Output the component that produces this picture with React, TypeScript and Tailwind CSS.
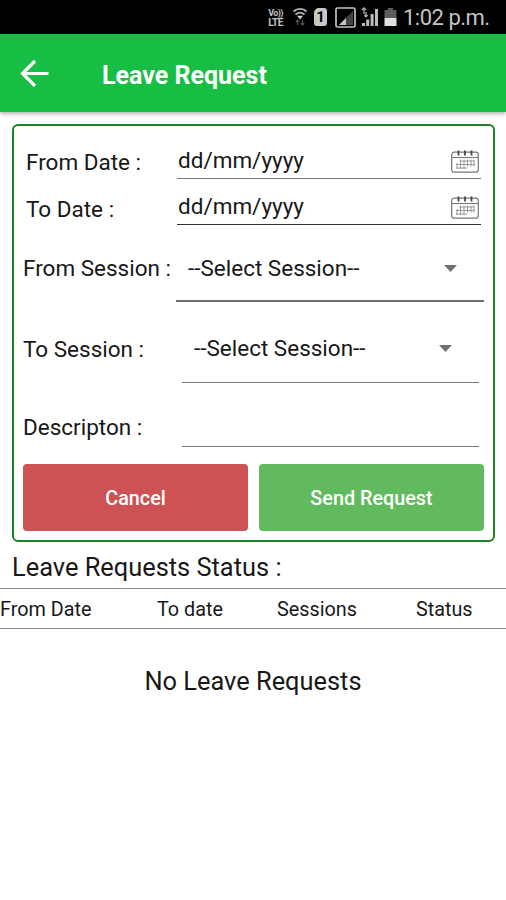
import React from "react";

function StatusBar() {
  return (
    <div className="flex h-[34px] items-center bg-black pl-[266px] text-[#c4c4c4]">
      <div className="flex w-[19px] flex-col items-center pt-[2px] font-bold">
        <span className="text-[9px] leading-[9px] tracking-[-0.6px]">Vo))</span>
        <span className="text-[10px] leading-[10px] tracking-[-0.5px]">LTE</span>
      </div>
      <svg width="16" height="20" viewBox="0 0 16 20" fill="none" className="ml-[7px]">
        <path d="M1.5 4.5C5.5 1 11 1 14.5 4.5M3.5 7.5C6.5 5 9.5 5 12.5 7.5" stroke="#b5b5b5" strokeWidth="1.9" />
        <path d="M5 8.8h6L8 12.5z" fill="#d0d0d0" />
        <path d="M5.5 13v5M3.8 15l1.7-2 1.7 2M10.5 13v5M8.8 16l1.7 2 1.7-2" stroke="#4d4d4d" strokeWidth="1.3" />
      </svg>
      <div className="ml-[6px] flex h-[18px] w-[13px] items-center justify-center rounded-[3px] rounded-tl-[5px] bg-[#c8c8c8] text-[15px] font-bold leading-none text-black">
        1
      </div>
      <svg width="21" height="21" viewBox="0 0 21 21" fill="none" className="ml-[8px]">
        <rect x="1" y="1" width="19" height="19" rx="1.5" stroke="#c2c2c2" strokeWidth="1.7" />
        <path d="M18 4v14H4z" fill="#444" />
        <path d="M11 11v7H4z" fill="#c2c2c2" />
      </svg>
      <svg width="18" height="20" viewBox="0 0 18 20" fill="none" className="ml-[5px]">
        <path d="M3 1v6M1 3l2-2 2 2M5 5v5M3.4 8L5 10l1.6-2" stroke="#aaa" strokeWidth="1.3" />
        <path d="M1 16h3v3H1zM5.2 12.5h3v6.5h-3zM9.6 7h3v12h-3zM14 2h3v17h-3z" fill="#bcbcbc" />
      </svg>
      <svg width="13" height="19" viewBox="0 0 13 19" className="ml-[5px]">
        <path d="M4 0h5v2h3.5v8H.5V2H4z" fill="#5c5c5c" />
        <path d="M.5 10h12v8H.5z" fill="#e0e0e0" />
      </svg>
      <span className="ml-[6px] whitespace-nowrap pt-[1px] text-[22px] leading-none tracking-[-0.5px]">1:02 p.m.</span>
    </div>
  );
}

function CalendarIcon() {
  return (
    <svg width="28" height="23" viewBox="0 0 28 23" fill="none" stroke="#777">
      <rect x="0.7" y="2.2" width="26.6" height="20" rx="2.5" strokeWidth="1.2" />
      <path d="M1 7.5h26" strokeWidth="1.1" />
      <path d="M7.5 0.5v5M14 0.5v5M20.5 0.5v5" stroke="#444" strokeWidth="1.8" />
      <path
        d="M8.5 11h15M5 14.5h18.5M5 18h11M9.5 9.5v9.5M13 9.5v9.5M16.5 9.5v7M20 9.5v7M23 9.5v7M6 13v6"
        stroke="#999"
        strokeWidth="1"
      />
    </svg>
  );
}

function Caret() {
  return (
    <svg width="13" height="7" viewBox="0 0 13 7" className="shrink-0">
      <path d="M0 0h13L6.5 7z" fill="#717171" />
    </svg>
  );
}

export default function App() {
  return (
    <div className="h-[900px] w-[506px] overflow-hidden bg-white font-['Roboto',sans-serif] text-[22.5px] leading-none text-[#181818]">
      <StatusBar />

      <header className="flex h-[78px] items-center bg-[#18be43] pl-[20px] text-white shadow-[0_2px_4px_rgba(0,0,0,0.3)]">
        <svg width="30" height="28" viewBox="0 0 30 28" fill="none" stroke="white" strokeWidth="3.2">
          <path d="M28.5 14.5H3M15 2L2.5 14.5L15 27" />
        </svg>
        <h1 className="ml-[52px] pt-[5px] text-[25px] font-bold leading-none">Leave Request</h1>
      </header>

      <section className="ml-[12px] mt-[12px] flex h-[418px] w-[483px] flex-col rounded-[6px] border-2 border-[#1d8128] px-[9px]">
        <div className="flex h-[53px] items-end">
          <label className="w-[154px] pb-[6px] pl-[3px]">From Date :</label>
          <div className="flex h-full w-[304px] items-end justify-between border-b border-[#777]">
            <span className="pb-[7px] pl-px">dd/mm/yyyy</span>
            <span className="pb-[5px] pr-[2px]"><CalendarIcon /></span>
          </div>
        </div>
        <div className="flex h-[46px] items-end">
          <label className="w-[154px] pb-[5px] pl-[3px]">To Date :</label>
          <div className="flex h-full w-[304px] items-end justify-between border-b border-[#333]">
            <span className="pb-[7px] pl-px">dd/mm/yyyy</span>
            <span className="pb-[5px] pr-[2px]"><CalendarIcon /></span>
          </div>
        </div>
        <div className="flex h-[77px] items-end">
          <label className="w-[153px] whitespace-nowrap pb-[23px]">From Session :</label>
          <div className="flex h-full w-[308px] items-end justify-between border-b-2 border-[#707070] pl-[12px] pr-[27px]">
            <span className="pb-[21px]">--Select Session--</span>
            <span className="pb-[28px]"><Caret /></span>
          </div>
        </div>
        <div className="flex h-[81px] items-end">
          <label className="w-[159px] pb-[23px]">To Session :</label>
          <div className="flex h-full w-[297px] items-end justify-between border-b border-[#777] pl-[12px] pr-[27px]">
            <span className="pb-[23px]">--Select Session--</span>
            <span className="pb-[30px]"><Caret /></span>
          </div>
        </div>
        <div className="flex h-[64px] items-end">
          <label className="w-[159px] pb-[9px]">Descripton :</label>
          <div className="h-full w-[297px] border-b border-[#777]" />
        </div>
        <div className="mt-[17px] flex gap-[11px] text-[19.8px] font-medium text-white">
          <button className="h-[67px] w-[225px] rounded-[4px] bg-[#cc5253] pt-[2px]">Cancel</button>
          <button className="h-[67px] w-[225px] rounded-[4px] bg-[#62ba5e] pt-[2px]">Send Request</button>
        </div>
      </section>

      <h2 className="flex h-[46px] items-end pb-[8px] pl-[12px] text-[25.4px]">Leave Requests Status :</h2>
      <div className="flex h-[41px] items-center border-y border-[#888] pt-[3px] text-[19.8px]">
        <span className="w-[157px]">From Date</span>
        <span className="w-[120px]">To date</span>
        <span className="w-[139px]">Sessions</span>
        <span>Status</span>
      </div>
      <p className="mt-[40px] text-center text-[25.4px]">No Leave Requests</p>
    </div>
  );
}
